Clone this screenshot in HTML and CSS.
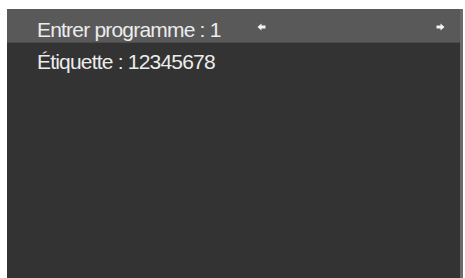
FILE: index.html
```html
<!DOCTYPE html>
<html>
<head>
<meta charset="utf-8">
<link rel="stylesheet" href="styles.css">
</head>
<body>
<div class="panel">
  <div class="row active">
    <span class="label">Entrer programme : 1</span>
    <svg class="arrow left" width="9" height="8" viewBox="0 0 9 8"><path d="M0.5 4 L4.5 0.5 L4.5 2.6 L8.5 2.6 L8.5 5.4 L4.5 5.4 L4.5 7.5 Z" fill="#f4f4f4"/></svg>
    <svg class="arrow right" width="9" height="8" viewBox="0 0 9 8"><path d="M8.5 4 L4.5 0.5 L4.5 2.6 L0.5 2.6 L0.5 5.4 L4.5 5.4 L4.5 7.5 Z" fill="#f4f4f4"/></svg>
  </div>
  <div class="row second">
    <span class="label">Étiquette : 12345678</span>
  </div>
</div>
</body>
</html>
```

FILE: styles.css
```css
html, body {
  margin: 0;
  padding: 0;
  background: #ffffff;
  width: 465px;
  height: 278px;
  overflow: hidden;
}
body {
  padding: 9px 2px 0 7px;
  box-sizing: border-box;
  font-family: "Liberation Sans", Arial, sans-serif;
}
.panel {
  height: 269px;
  background: #333333;
  border-right: 3px solid #6a6a6a;
  box-sizing: border-box;
  display: flex;
  flex-direction: column;
}
.row {
  height: 34px;
  box-sizing: border-box;
  display: flex;
  align-items: flex-start;
  padding-left: 30px;
  color: #ececec;
  font-size: 21px;
  letter-spacing: -0.8px;
  line-height: 24px;
}
.row.active {
  background: #595959;
  border-bottom: 1px solid #4a4a4a;
}
.row.active .label {
  margin-top: 9px;
}
.row.second .label {
  margin-top: 7px;
}
.row .label {
  width: 220px;
  white-space: nowrap;
}
.arrow {
  display: block;
  flex: none;
  margin-top: 14px;
}
.arrow.right {
  margin-left: auto;
  margin-right: 15px;
}
```
